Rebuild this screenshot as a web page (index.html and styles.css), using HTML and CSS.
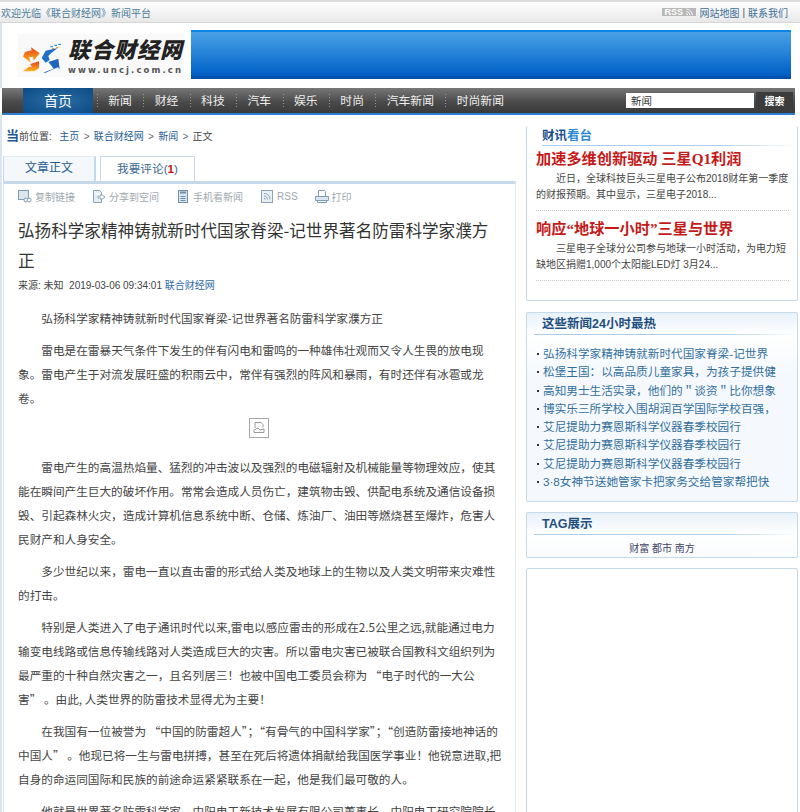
FILE: index.html
```html
<!DOCTYPE html>
<html lang="zh-CN">
<head>
    <meta charset="UTF-8">
    <title>弘扬科学家精神铸就新时代国家脊梁-记世界著名防雷科学家濮方正</title>
    <link rel="stylesheet" href="styles.css">
</head>
<body>
    <div class="topbar">
        <span class="welcome">欢迎光临《联合财经网》新闻平台</span>
        <div class="top-links">
            <span class="rss-badge">RSS <svg width="9" height="8" viewBox="0 0 10 10" fill="none" stroke="#fff" stroke-width="1.2"><path d="M1 1.500c4 0 7.500 3.500 7.500 7.500M1 4.500c2.500 0 4.500 2 4.500 4.500"/><circle cx="2" cy="8" r="1" fill="#fff" stroke="none"/></svg></span>
            <a href="#">网站地图</a> | <a href="#">联系我们</a>
        </div>
    </div>

    <div class="header">
        <div class="logo">
            <svg class="logo-mark" width="45" height="35" viewBox="9 6 135 105">
                <defs>
                    <linearGradient id="warm" x1="0" y1="0" x2="0" y2="1">
                        <stop offset="0" stop-color="#e8401a"/>
                        <stop offset="1" stop-color="#fbb81e"/>
                    </linearGradient>
                </defs>
                <path d="M24 62L30 48 50 43 48 34 74 52 56 74 54 62 42 64 48 80z" fill="url(#warm)"/>
                <path d="M24 106L42 92 50 94 46 84 72 76 72 96 58 106z" fill="url(#warm)"/>
                <path d="M80 66L92 44 128 36 108 52 100 60 104 72 92 80z" fill="#1f6fc4"/>
                <path d="M84 110L116 98 110 90 100 78 130 68 134 100 128 94 92 110z" fill="#1b66bc"/>
                <path d="M106 30h8v4h-8zM118 26h8v4h-8zM130 23h8v4h-8z" fill="#2b96dc"/>
                <path d="M112 36h6v3h-6zM124 33h6v3h-6z" fill="#f08a24"/>
            </svg>
            <div class="logo-text">
                <div class="logo-name">联合财经网</div>
                <div class="logo-url">www.uncj.com.cn</div>
            </div>
        </div>
        <div class="banner"></div>
    </div>

    <div class="nav">
        <a class="nav-home" href="#">首页</a>
        <a class="nav-item" href="#">新闻</a>
        <a class="nav-item" href="#">财经</a>
        <a class="nav-item" href="#">科技</a>
        <a class="nav-item" href="#">汽车</a>
        <a class="nav-item" href="#">娱乐</a>
        <a class="nav-item" href="#">时尚</a>
        <a class="nav-item" href="#">汽车新闻</a>
        <a class="nav-item" href="#">时尚新闻</a>
        <div class="search">
            <input class="search-input" type="text" value="新闻">
            <button class="search-btn">搜索</button>
        </div>
    </div>

    <div class="main">
        <div class="left-col">
            <div class="crumbs">
                <span class="crumbs-first">当</span>前位置:&nbsp; <a href="#">主页</a> <i>&gt;</i> <a href="#">联合财经网</a> <i>&gt;</i> <a href="#">新闻</a> <i>&gt;</i> 正文
            </div>
            <div class="tabs">
                <div class="tab tab-active">文章正文</div>
                <div class="tab">我要评论(<b>1</b>)</div>
            </div>
            <div class="article">
                <div class="tools">
                    <span class="tool">
                        <svg width="14" height="13" viewBox="0 0 14 13" fill="none" stroke="#7f9db5"><rect x="0.500" y="0.500" width="10" height="9" fill="#dbe6ef"/><circle cx="8" cy="10" r="2" fill="#fff"/><circle cx="11" cy="10" r="2" fill="#fff"/></svg>
                        复制链接
                    </span>
                    <span class="tool">
                        <svg width="14" height="13" viewBox="0 0 14 13" fill="none" stroke="#8aa3b8"><path d="M1.500 0.500h6l2 2v3M9.500 10v2.500h-8v-12" fill="#e6eef5"/><path d="M6 6h3V4l4 3-4 3V8H6z" fill="#fff"/></svg>
                        分享到空间
                    </span>
                    <span class="tool">
                        <svg width="14" height="13" viewBox="0 0 14 13" fill="none" stroke="#6f8ea8"><rect x="2.500" y="0.500" width="9" height="12" fill="#dbe6ef"/><path d="M4 2.500h6" stroke-width="2"/><path d="M4.500 6.500h5M4.500 8.500h5M4.500 10.500h5"/></svg>
                        手机看新闻
                    </span>
                    <span class="tool">
                        <svg width="14" height="13" viewBox="0 0 14 13" fill="none" stroke="#8aa3b8"><rect x="1.500" y="0.500" width="11" height="12" fill="#e8f0f6"/><path d="M4 3.500c3.500 0 6 2.500 6 6M4 6c2 0 3.500 1.500 3.500 3.500M4 8.500h1v1"/></svg>
                        RSS
                    </span>
                    <span class="tool">
                        <svg width="14" height="13" viewBox="0 0 14 13" fill="none" stroke="#7f9db5"><path d="M3.500 6V0.500h6l1 1V6" fill="#fff"/><path d="M0.500 6.500h13v4h-13z" fill="#dbe6ef"/><path d="M2.500 10.500h9v2h-9z" fill="#fff"/></svg>
                        打印
                    </span>
                </div>
                <h1 class="title">弘扬科学家精神铸就新时代国家脊梁-记世界著名防雷科学家濮方正</h1>
                <div class="meta">来源: 未知&nbsp; 2019-03-06 09:34:01 <a href="#">联合财经网</a></div>
                <div class="content">
                    <p>弘扬科学家精神铸就新时代国家脊梁-记世界著名防雷科学家濮方正</p>
                    <p>雷电是在雷暴天气条件下发生的伴有闪电和雷鸣的一种雄伟壮观而又令人生畏的放电现象。雷电产生于对流发展旺盛的积雨云中，常伴有强烈的阵风和暴雨，有时还伴有冰雹或龙卷。</p>
                    <div class="broken-img">
                        <svg width="20" height="20" viewBox="0 0 20 20" fill="none" stroke="#9a9a9a"><rect x="0.500" y="0.500" width="19" height="19" stroke="#a8a8a8" fill="#fff"/><path d="M6 4.500h6l2 2v3M6 4.500v5.500M5 12l4-2 2 2 4-1v3.500H5z"/></svg>
                    </div>
                    <p>雷电产生的高温热焰量、猛烈的冲击波以及强烈的电磁辐射及机械能量等物理效应，使其能在瞬间产生巨大的破坏作用。常常会造成人员伤亡，建筑物击毁、供配电系统及通信设备损毁、引起森林火灾，造成计算机信息系统中断、仓储、炼油厂、油田等燃烧甚至爆炸，危害人民财产和人身安全。</p>
                    <p>多少世纪以来，雷电一直以直击雷的形式给人类及地球上的生物以及人类文明带来灾难性的打击。</p>
                    <p>特别是人类进入了电子通讯时代以来,雷电以感应雷击的形成在2.5公里之远,就能通过电力输变电线路或信息传输线路对人类造成巨大的灾害。所以雷电灾害已被联合国教科文组织列为最严重的十种自然灾害之一，且名列居三！也被中国电工委员会称为 “电子时代的一大公<br>害” 。由此, 人类世界的防雷技术显得尤为主要！</p>
                    <p>在我国有一位被誉为 “中国的防雷超人”；“有骨气的中国科学家”；“创造防雷接地神话的<br>中国人” 。他现已将一生与雷电拼搏，甚至在死后将遗体捐献给我国医学事业！他锐意进取,把<br>自身的命运同国际和民族的前途命运紧紧联系在一起，他是我们最可敬的人。</p>
                    <p>他就是世界著名防雷科学家、中阳电工新技术发展有限公司董事长、中阳电工研究院院长</p>
                </div>
            </div>
        </div>

        <div class="side-col">
            <div class="box box-news">
                <h3 class="box-title"><span class="t-dark">财讯</span><span class="t-light">看台</span></h3>
                <div class="news-item">
                    <h2>加速多维创新驱动 三星Q1利润</h2>
                    <p>近日，全球科技巨头三星电子公布2018财年第一季度的财报预期。其中显示，三星电子2018...</p>
                </div>
                <div class="news-item">
                    <h2>响应“地球一小时”三星与世界</h2>
                    <p>三星电子全球分公司参与地球一小时活动，为电力短缺地区捐赠1,000个太阳能LED灯 3月24...</p>
                </div>
            </div>

            <div class="box box-tint box-hot">
                <h3 class="box-title">这些新闻24小时最热</h3>
                <ul class="hot-list">
                    <li><a href="#">弘扬科学家精神铸就新时代国家脊梁-记世界</a></li>
                    <li><a href="#">松堡王国：以高品质儿童家具，为孩子提供健</a></li>
                    <li><a href="#">高知男士生活实录，他们的＂谈资＂比你想象</a></li>
                    <li><a href="#">博实乐三所学校入围胡润百学国际学校百强，</a></li>
                    <li><a href="#">艾尼提助力赛恩斯科学仪器春季校园行</a></li>
                    <li><a href="#">艾尼提助力赛恩斯科学仪器春季校园行</a></li>
                    <li><a href="#">艾尼提助力赛恩斯科学仪器春季校园行</a></li>
                    <li><a href="#">3·8女神节送她管家卡把家务交给管家帮把快</a></li>
                </ul>
            </div>

            <div class="box box-tint box-tag">
                <h3 class="box-title">TAG展示</h3>
                <div class="tags"><a href="#">财富</a> <a href="#">都市</a> <a href="#">南方</a></div>
            </div>

            <div class="box box-blank"></div>
        </div>
    </div>
</body>
</html>
```

FILE: styles.css
```css
* {
    margin: 0;
    padding: 0;
    box-sizing: border-box;
}

html, body {
    height: 812px;
    overflow: hidden;
}

body {
    font-family: "Liberation Sans", "Noto Sans CJK SC", sans-serif;
    font-size: 11.65px;
    color: #333;
    background-color: #fff;
    width: 800px;
}

a {
    color: #1f5c94;
    text-decoration: none;
}

.topbar {
    height: 23px;
    display: flex;
    justify-content: space-between;
    align-items: center;
    padding: 0 12px 0 1px;
    font-size: 10px;
    background: linear-gradient(#fff, #e8e8e8);
    border-top: 2px solid #dcdcdc;
    border-bottom: 1px solid #d6d6d6;
    color: #4c7d9c;
}

.top-links {
    display: flex;
    align-items: center;
    gap: 3px;
    color: #555;
}

.top-links a {
    color: #3f7198;
}

.rss-badge {
    display: inline-flex;
    align-items: center;
    gap: 2px;
    height: 8px;
    width: 34px;
    padding-left: 2px;
    background-color: #b8b8b8;
    color: #fff;
    font-size: 9px;
    font-weight: bold;
    line-height: 8px;
    overflow: hidden;
}

.header {
    height: 65px;
    display: flex;
    align-items: flex-start;
    padding: 7px 9px 0 18px;
    background: linear-gradient(90deg, #d9e5f0 2px, #fff 2px);
}

.logo {
    width: 166px;
    height: 43px;
    margin-top: 4px;
    display: flex;
    align-items: center;
    gap: 5px;
    background-color: #f9f9f9;
    flex-shrink: 0;
}

.logo-mark {
    flex-shrink: 0;
}

.logo-name {
    font-family: "Noto Sans CJK SC", sans-serif;
    font-size: 22px;
    font-weight: 900;
    font-style: italic;
    letter-spacing: 1px;
    line-height: 26px;
    color: #222;
    white-space: nowrap;
}

.logo-url {
    font-family: "DejaVu Sans", sans-serif;
    font-size: 8.5px;
    font-weight: bold;
    letter-spacing: 2.1px;
    color: #555;
    line-height: 11px;
    margin-top: 4px;
    white-space: nowrap;
}

.banner {
    flex: 1;
    height: 49px;
    margin-left: 7px;
    background: linear-gradient(#4aa0e4, #2583d8 45%, #0161c6 92%, #014ea8);
    border-top: 2px solid #0a86e8;
    border-bottom: 1px solid #0050a8;
}

.nav {
    height: 27px;
    margin: 0 5px 0 2px;
    display: flex;
    align-items: center;
    padding-left: 21px;
    background: linear-gradient(#777, #4b4b4b 55%, #3a3a3a);
    border-bottom: 2px solid #2a7fd6;
}

.nav-home {
    width: 70px;
    height: 27px;
    margin-top: 2px;
    margin-right: 4px;
    text-align: center;
    line-height: 26px;
    font-size: 14px;
    color: #fff;
    background: radial-gradient(ellipse at center, #2a6ea6, #0d4a84);
    border-bottom: 2px solid #2a7fd6;
}

.nav-item {
    color: #eee;
    font-size: 11.8px;
    padding: 0 11.5px 0 11.3px;
    line-height: 14px;
    background: linear-gradient(#999 50%, transparent 50%) left top / 1px 3px repeat-y;
    white-space: nowrap;
}

.search {
    margin-left: auto;
    display: flex;
    align-items: center;
    padding-right: 2px;
}

.search-input {
    width: 128px;
    height: 15px;
    border: none;
    padding-left: 5px;
    font: 10.5px "Liberation Sans", "Noto Sans CJK SC", sans-serif;
    color: #333;
    background-color: #fff;
}

.search-btn {
    width: 37px;
    height: 18px;
    margin-left: 2px;
    border: none;
    background-color: #3c3c3c;
    color: #fff;
    font: bold 10px "Liberation Sans", "Noto Sans CJK SC", sans-serif;
}

.main {
    display: flex;
    gap: 10px;
    padding: 11px 2px 0 3px;
    background: linear-gradient(90deg, #d9e5f0 2px, #fff 2px);
}

.left-col {
    width: 513px;
    flex-shrink: 0;
}

.crumbs {
    height: 19px;
    line-height: 19px;
    font-size: 10px;
    color: #444;
    padding-left: 3px;
    white-space: nowrap;
}

.crumbs a:first-of-type {
    margin-left: 2px;
}

.crumbs i {
    font-style: normal;
    color: #667;
    margin: 0 1.5px;
}

.crumbs-first {
    font-size: 13px;
    font-weight: bold;
    color: #1f5c94;
}

.tabs {
    display: flex;
    gap: 4px;
    margin-top: 11px;
    height: 25px;
    align-items: flex-end;
}

.tab {
    width: 95px;
    height: 25px;
    line-height: 23px;
    text-align: center;
    color: #3a6a90;
    background-color: #fff;
    border: 1px solid #c5d9e8;
    border-bottom: none;
}

.tab b {
    color: #d01010;
}

.tab-active {
    width: 93px;
    font-size: 12px;
    color: #1f5c94;
    background-color: #f4f8fb;
    border-top-color: #e2edf5;
    border-right-width: 2px;
}

.article {
    height: 640px;
    padding: 0 13px 0 14px;
    border-top: 3px solid #c5d9e8;
    border-left: 1px solid #dfeaf2;
    border-right: 1px solid #dfeaf2;
    overflow: hidden;
}

.tools {
    display: flex;
    gap: 17px;
    height: 24px;
    align-items: center;
    font-size: 10px;
    color: #a0a8ae;
}

.tool {
    display: inline-flex;
    align-items: center;
    gap: 3px;
}

.title {
    font-family: "Noto Sans CJK SC", sans-serif;
    font-size: 16.6px;
    font-weight: normal;
    line-height: 30px;
    color: #333;
    margin-top: 7px;
    padding-right: 6px;
}

.meta {
    line-height: 20px;
    margin-top: 1px;
    color: #444;
    font-size: 10px;
}

.meta a {
    color: #2d6aa5;
}

.content {
    margin-top: 10px;
    font-family: "Noto Sans CJK SC", sans-serif;
}

.content p {
    line-height: 24.2px;
    text-indent: 23.3px;
    margin-bottom: 7.4px;
    color: #444;
}

.broken-img {
    height: 20px;
    margin: 6px 0 17px;
    padding-right: 2px;
    text-align: center;
    line-height: 0;
}

.side-col {
    flex: 1;
    min-width: 0;
}

.box {
    border: 1px solid #c5d9e8;
    border-radius: 2px;
    margin-bottom: 10px;
}

.box-news {
    height: 175px;
    border-top: none;
    padding-left: 9px;
    margin-bottom: 11px;
}

.box-tint {
    background: linear-gradient(#e8f2fa, #fff 22px, #f5f9fd 60px);
}

.box-title {
    height: 22px;
    margin-left: 7px;
    padding-left: 8px;
    font-size: 12.5px;
    font-weight: bold;
    line-height: 22px;
    color: #1f4f80;
    background: linear-gradient(90deg, #a9cdea 70%, #fff) left bottom / 100% 1px no-repeat;
}

.box-news .box-title {
    margin-left: 6px;
    padding-left: 0;
    height: 20px;
    line-height: 20px;
}

.t-dark {
    color: #1b4f8c;
}

.t-light {
    color: #2b8ad0;
}

.news-item {
    height: 65px;
    margin-right: 8px;
    border-bottom: 1px dotted #ccc;
}

.news-item + .news-item {
    height: 70px;
    padding-top: 5px;
}

.news-item h2 {
    font-family: "Liberation Serif", "Noto Sans CJK SC", serif;
    font-size: 15.2px;
    font-weight: bold;
    line-height: 25px;
    color: #c41a1a;
    white-space: nowrap;
}

.news-item p {
    line-height: 15.5px;
    font-size: 10px;
    text-indent: 20px;
    color: #444;
}

.hot-list {
    list-style: none;
    padding: 10px 0 3px 9px;
}

.hot-list li {
    height: 18.3px;
    line-height: 18px;
    white-space: nowrap;
    overflow: hidden;
    padding-left: 7px;
    position: relative;
}

.hot-list li::before {
    content: "";
    position: absolute;
    left: 1px;
    top: 8px;
    width: 2px;
    height: 2px;
    background-color: #333;
}

.hot-list a {
    color: #336f9e;
}

.box-hot {
    height: 190px;
}

.box-tag {
    height: 46px;
}

.tags {
    text-align: center;
    line-height: 18px;
    padding-top: 5px;
    font-size: 10px;
}

.tags a {
    color: #446;
}

.box-blank {
    height: 300px;
}
```
